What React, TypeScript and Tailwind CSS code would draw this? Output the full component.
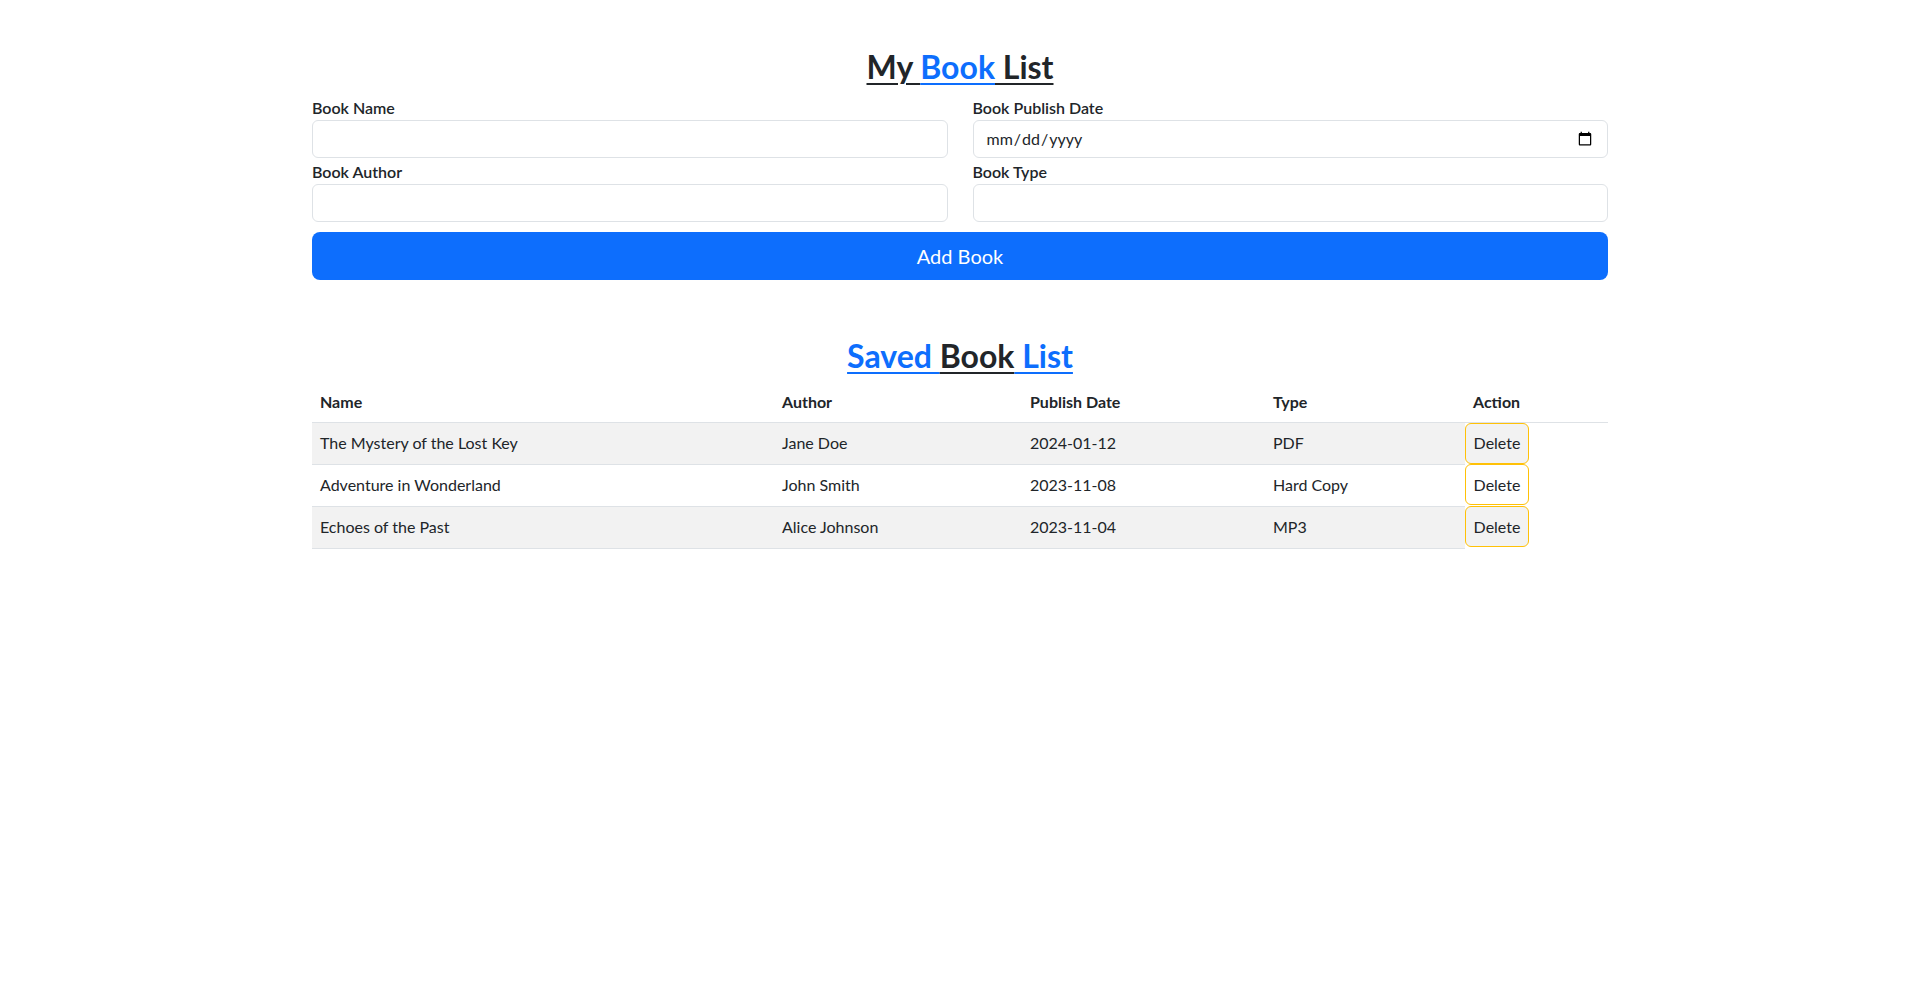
import React from "react";

const books = [
  { name: "The Mystery of the Lost Key", author: "Jane Doe", date: "2024-01-12", type: "PDF" },
  { name: "Adventure in Wonderland", author: "John Smith", date: "2023-11-08", type: "Hard Copy" },
  { name: "Echoes of the Past", author: "Alice Johnson", date: "2023-11-04", type: "MP3" },
];

export default function App() {
  return (
    <div className="min-h-screen bg-white text-[#212529] font-['Lato','Liberation_Sans',sans-serif]">
      <div className="w-[1296px] mx-auto pt-[48px]">
        <h2 className="text-center text-[32px] leading-[1.2] font-bold mb-[10px]">
          <span className="underline decoration-[#212529] decoration-2 underline-offset-4">My </span>
          <span className="underline text-[#0d6efd] decoration-2 underline-offset-4">Book</span>
          <span className="underline decoration-[#212529] decoration-2 underline-offset-4"> List</span>
        </h2>

        <form className="grid grid-cols-2 gap-x-[25px] gap-y-[2px]" onSubmit={(e) => e.preventDefault()}>
          <div className="flex flex-col">
            <label className="text-base leading-6 font-semibold">Book Name</label>
            <input type="text" className="h-[38px] border border-[#dee2e6] rounded-md px-3 text-base outline-none" />
          </div>
          <div className="flex flex-col">
            <label className="text-base leading-6 font-semibold">Book Publish Date</label>
            <input type="date" className="h-[38px] border border-[#dee2e6] rounded-md px-3 text-base text-[#212529] outline-none" />
          </div>
          <div className="flex flex-col">
            <label className="text-base leading-6 font-semibold">Book Author</label>
            <input type="text" className="h-[38px] border border-[#dee2e6] rounded-md px-3 text-base outline-none" />
          </div>
          <div className="flex flex-col">
            <label className="text-base leading-6 font-semibold">Book Type</label>
            <input type="text" className="h-[38px] border border-[#dee2e6] rounded-md px-3 text-base outline-none" />
          </div>
          <button className="col-span-2 mt-[8px] h-[48px] bg-[#0d6efd] text-white text-[20px] rounded-lg">
            Add Book
          </button>
        </form>

        <h2 className="text-center text-[32px] leading-[1.2] font-bold mt-[57px] mb-[6px]">
          <span className="underline text-[#0d6efd] decoration-2 underline-offset-4">Saved </span>
          <span className="underline decoration-[#212529] decoration-2 underline-offset-4">Book</span>
          <span className="underline text-[#0d6efd] decoration-2 underline-offset-4"> List</span>
        </h2>

        <table className="w-full table-fixed border-collapse text-base">
          <thead>
            <tr className="border-b border-[#dee2e6]">
              <th className="w-[462px] text-left font-bold px-2 py-2 leading-6">Name</th>
              <th className="w-[248px] text-left font-bold px-2 py-2 leading-6">Author</th>
              <th className="w-[243px] text-left font-bold px-2 py-2 leading-6">Publish Date</th>
              <th className="w-[200px] text-left font-bold px-2 py-2 leading-6">Type</th>
              <th className="text-left font-bold px-2 py-2 leading-6">Action</th>
            </tr>
          </thead>
          <tbody>
            {books.map((b, i) => {
              const cell = `px-2 h-[42px] border-b border-[#dee2e6] leading-6 ${i % 2 === 0 ? "bg-[#f2f2f2]" : "bg-white"}`;
              return (
                <tr key={b.name}>
                  <td className={cell}>{b.name}</td>
                  <td className={cell}>{b.author}</td>
                  <td className={cell}>{b.date}</td>
                  <td className={cell}>{b.type}</td>
                  <td className="p-0 h-[42px] align-top">
                    <button
                      className={`h-[41px] w-[64px] border border-[#ffc107] rounded-md text-base ${
                        i % 2 === 0 ? "bg-[#f2f2f2]" : "bg-white"
                      }`}
                    >
                      Delete
                    </button>
                  </td>
                </tr>
              );
            })}
          </tbody>
        </table>
      </div>
    </div>
  );
}
